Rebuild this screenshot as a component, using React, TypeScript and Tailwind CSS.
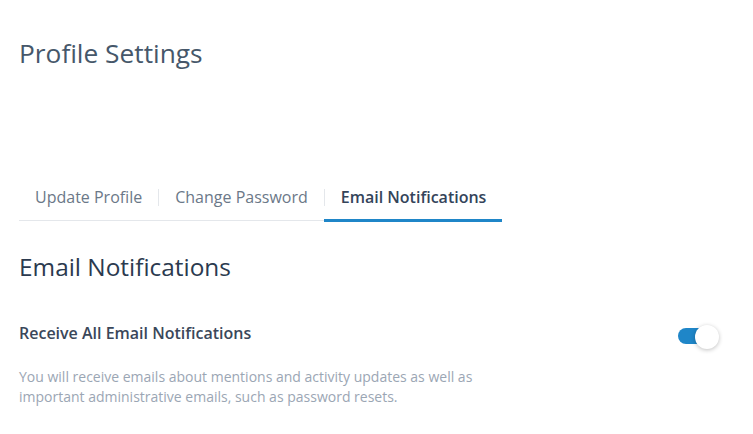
import React from "react";

export default function App() {
  return (
    <div className="min-h-[434px] w-full bg-white px-[19px] pt-[37px] font-['Open_Sans',_'Liberation_Sans',_sans-serif]">
      <h1 className="text-[26.3px] leading-[32px] font-normal text-[#46576a]">Profile Settings</h1>

      <div className="mt-[116px] inline-flex items-start border-b border-[#e4e7eb]">
        <div className="px-4 pb-[11px] text-[16px] leading-[24px] text-[#6b7888]">Update Profile</div>
        <span className="mt-[4px] h-[17px] w-px bg-[#e4e7eb]" />
        <div className="px-4 pb-[11px] text-[16px] leading-[24px] text-[#6b7888]">Change Password</div>
        <span className="mt-[4px] h-[17px] w-px bg-[#e4e7eb]" />
        <div className="-mb-[2px] -ml-px border-b-[3px] border-[#1f86c8] pl-[17px] pr-4 pb-[10px] text-[16px] leading-[24px] font-semibold text-[#34445a]">
          Email Notifications
        </div>
      </div>

      <h2 className="mt-[30px] text-[24.4px] leading-[32px] font-normal text-[#2b3a4f]">Email Notifications</h2>

      <div className="mt-[38px] flex items-start justify-between">
        <div className="text-[16px] leading-[24px] font-semibold text-[#3a475a]">Receive All Email Notifications</div>
        <div className="relative mr-[15px] mt-[4px] h-[24px] w-[41px]">
          <div className="absolute left-0 top-[3px] h-[16px] w-[34px] rounded-full bg-[#1f86c8]" />
          <div className="absolute right-0 top-0 h-[24px] w-[24px] rounded-full bg-white shadow-[0_1px_4px_rgba(0,0,0,0.25)]" />
        </div>
      </div>

      <p className="mt-[18px] max-w-[480px] text-[14px] leading-[20px] text-[#9ba6b4]">
        You will receive emails about mentions and activity updates as well as important administrative emails, such as password resets.
      </p>
    </div>
  );
}
